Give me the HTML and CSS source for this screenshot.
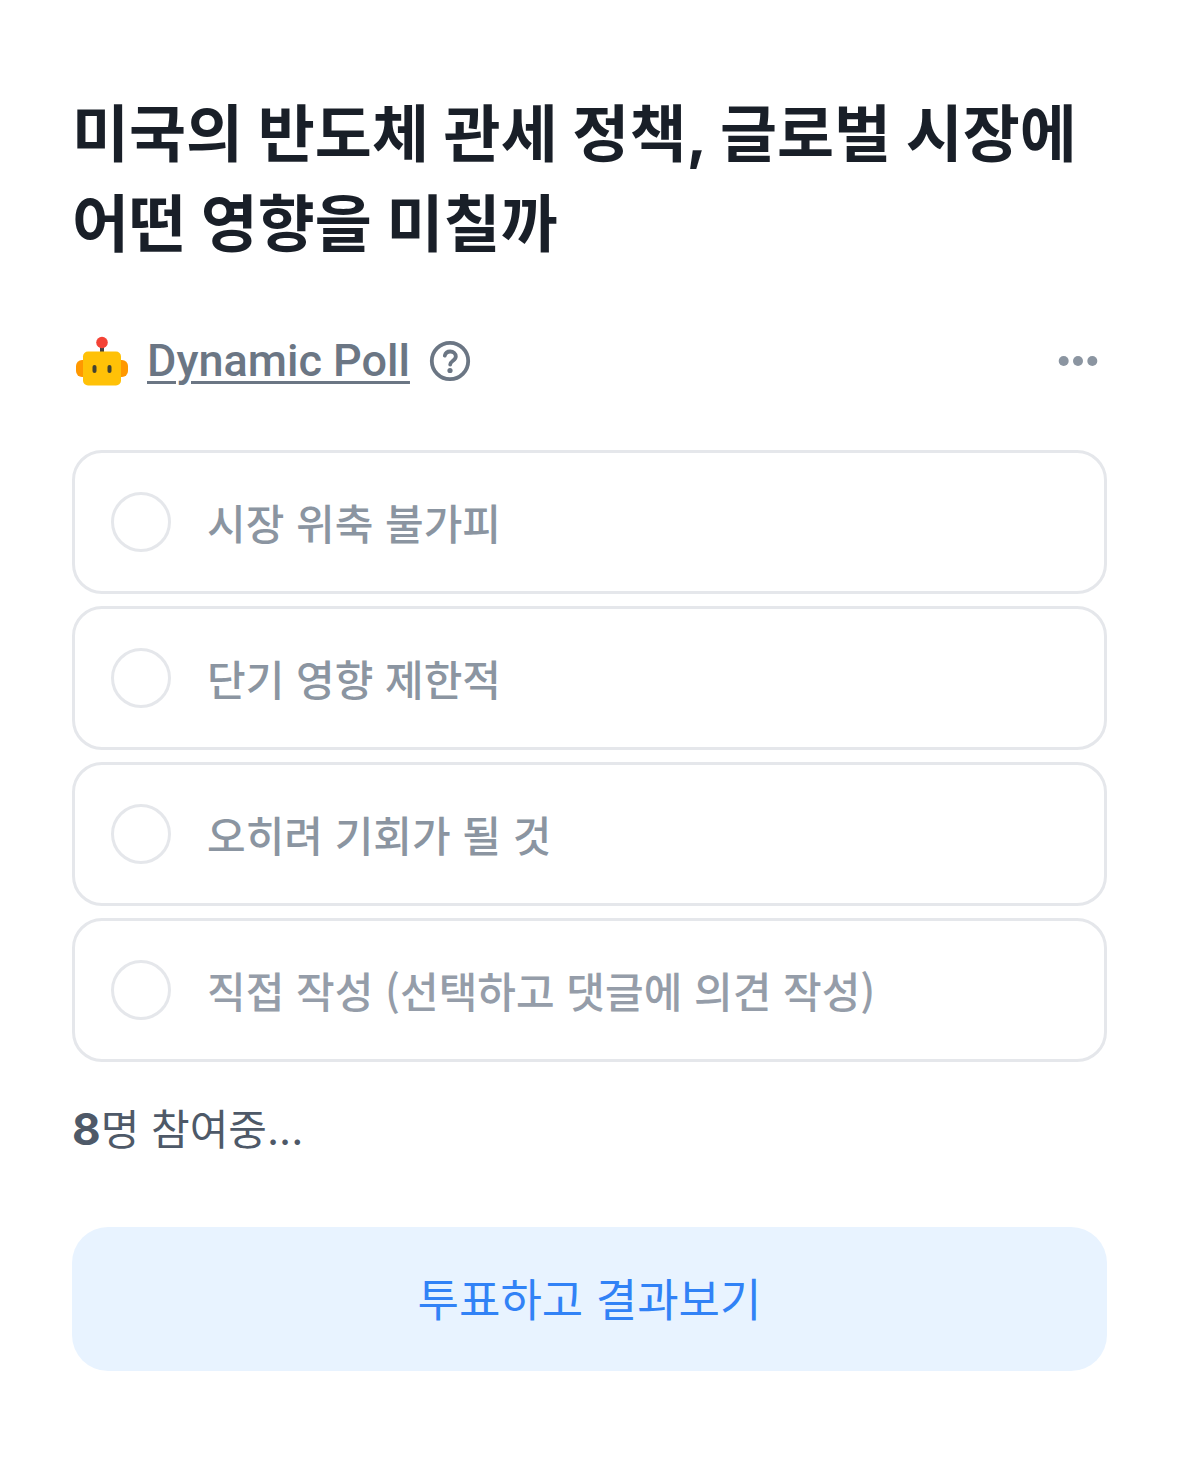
FILE: index.html
```html
<!DOCTYPE html>
<html lang="ko">
<head>
<meta charset="utf-8">
<meta name="viewport" content="width=device-width, initial-scale=1">
<title>Dynamic Poll</title>
<link rel="stylesheet" href="styles.css">
</head>
<body>
<main class="poll">
  <h1 class="title">미국의 반도체 관세 정책, 글로벌 시장에 어떤 영향을 미칠까</h1>
  <div class="meta">
    <svg class="robot" viewBox="0 0 60 60" aria-hidden="true">
      <rect x="4" y="29" width="52" height="17" rx="6" fill="#ff9800"/>
      <rect x="28" y="14" width="4" height="10" fill="#424242"/>
      <circle cx="30" cy="11.500" r="5.800" fill="#f44336"/>
      <rect x="11" y="20.500" width="38" height="34" rx="5" fill="#ffc107"/>
      <rect x="20.500" y="34" width="4" height="8" rx="2" fill="#424231"/>
      <rect x="35.500" y="34" width="4" height="8" rx="2" fill="#424231"/>
    </svg>
    <a class="source" href="#">Dynamic Poll</a>
    <button class="icon-button" type="button" aria-label="도움말">
      <svg class="help" viewBox="0 0 48 48" aria-hidden="true">
        <g fill="none" stroke="currentColor" stroke-width="3.800" stroke-linecap="round" stroke-linejoin="round">
          <circle cx="24" cy="24" r="18.200"/>
          <path d="M18.800 18.600C19.400 16 21.500 14.500 24.200 14.500c3.200 0 5.600 2 5.600 4.900 0 4.200-5.600 4.400-5.600 8.200"/>
        </g>
        <circle cx="24" cy="33.500" r="2.600" fill="currentColor"/>
      </svg>
    </button>
    <button class="icon-button more" type="button" aria-label="더보기">
      <svg class="dots" viewBox="0 0 40 12" aria-hidden="true"><g fill="currentColor"><circle cx="5.700" cy="6" r="5"/><circle cx="20" cy="6" r="5"/><circle cx="34.300" cy="6" r="5"/></g></svg>
    </button>
  </div>
  <form class="form">
    <div class="options" role="radiogroup" aria-label="투표 항목">
      <label class="option"><input class="radio" type="radio" name="vote"><span>시장 위축 불가피</span></label>
      <label class="option"><input class="radio" type="radio" name="vote"><span>단기 영향 제한적</span></label>
      <label class="option"><input class="radio" type="radio" name="vote"><span>오히려 기회가 될 것</span></label>
      <label class="option option-custom"><input class="radio" type="radio" name="vote"><span>직접 작성 (선택하고 댓글에 의견 작성)</span></label>
    </div>
    <p class="count"><strong class="number">8</strong>명 참여중...</p>
    <button class="submit" type="button">투표하고 결과보기</button>
  </form>
</main>
</body>
</html>
```
FILE: styles.css
```css
* { box-sizing: border-box; }
body {
  margin: 0;
  background: #fff;
  color: #4e5968;
  font-family: Inter, "Noto Sans CJK KR", sans-serif;
  font-size: 42px;
}
button { font: inherit; border: 0; }
.poll { padding: 90px 72px; }
.title {
  margin: 0 0 58px;
  color: #191f28;
  font-size: 62px;
  font-weight: 700;
  line-height: 90px;
}
.meta { display: flex; align-items: center; height: 66px; margin-bottom: 56px; color: #6b7684; }
.robot { width: 60px; height: 60px; margin-right: 15px; }
.source {
  color: inherit;
  font-family: Roboto, sans-serif;
  font-size: 45px;
  font-weight: 500;
  line-height: 66px;
  text-underline-offset: 5px;
  text-decoration-thickness: 3px;
}
.icon-button { display: flex; padding: 0; background: none; color: inherit; }
.help { width: 48px; height: 48px; margin-left: 16px; }
.more { margin-left: auto; margin-right: 9px; color: #8b95a1; }
.dots { width: 40px; height: 12px; }
.options { display: flex; flex-direction: column; gap: 12px; }
.option {
  display: flex;
  align-items: center;
  gap: 36px;
  height: 144px;
  padding: 0 36px 2px;
  border: 3px solid #e5e7eb;
  border-radius: 30px;
  color: #8b95a1;
  font-family: "Noto Sans CJK KR", sans-serif;
  font-weight: 500;
  line-height: 66px;
}
.option { padding-bottom: 0; }
.option-custom { color: #959da9; }
.radio {
  appearance: none;
  width: 60px;
  height: 60px;
  margin: 0;
  border: 3px solid #e5e7eb;
  border-radius: 50%;
}
.radio:checked { border: 18px solid #3182f6; }
.count { margin: 35px 0 64px; line-height: 66px; }
.number { font-size: 44px; line-height: 1; }
.submit {
  width: 100%;
  height: 144px;
  padding: 0 0 4px;
  border-radius: 36px;
  background: #e8f3ff;
  color: #3182f6;
  font-family: "Noto Sans CJK KR", sans-serif;
  font-size: 45px;
}
```
